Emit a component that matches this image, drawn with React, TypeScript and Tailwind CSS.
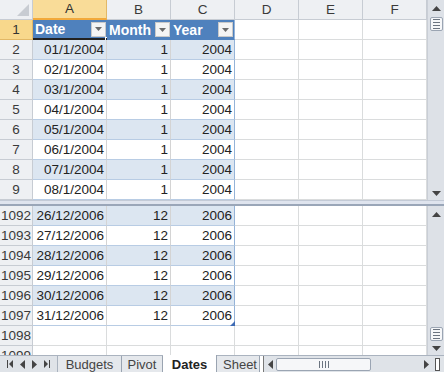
import React from "react";

const COLS = [
  { name: "A", w: 74 },
  { name: "B", w: 64 },
  { name: "C", w: 64 },
  { name: "D", w: 64 },
  { name: "E", w: 64 },
  { name: "F", w: 64 },
];

type RowData = { n: number; a?: string; b?: string; c?: string; band?: "blue" | "white"; last?: boolean };

const top: RowData[] = [];
for (let i = 2; i <= 9; i++) {
  top.push({ n: i, a: `0${i - 1}/1/2004`, b: "1", c: "2004", band: i % 2 === 0 ? "blue" : "white" });
}
const bottom: RowData[] = [];
for (let i = 1092; i <= 1097; i++) {
  bottom.push({ n: i, a: `${i - 1066}/12/2006`, b: "12", c: "2006", band: i % 2 === 0 ? "blue" : "white", last: i === 1097 });
}
bottom.push({ n: 1098 });
bottom.push({ n: 1099 });

function RowHeader({ n, selected }: { n: number | string; selected?: boolean }) {
  return (
    <div
      className={`w-[33px] h-[20px] shrink-0 flex items-center justify-center border-r border-b ${
        selected ? "bg-[#f8d88c] border-[#e2b866] text-[#333]" : "bg-[#eef0f3] border-[#c7ccd3] text-[#3a3a3a]"
      }`}
    >
      {n}
    </div>
  );
}

function Dropdown() {
  return (
    <div className="w-[15px] h-[15px] bg-[#f4f4f4] border border-[#c9c9c9] flex items-center justify-center shrink-0">
      <svg width="7" height="4" viewBox="0 0 7 4">
        <path d="M0 0 L7 0 L3.5 4 Z" fill="#6b6b6b" />
      </svg>
    </div>
  );
}

function DataRow({ r }: { r: RowData }) {
  const has = r.a !== undefined;
  const bg = r.band === "blue" ? "bg-[#dce6f1]" : "bg-white";
  return (
    <div className="flex h-[20px]">
      <RowHeader n={r.n} />
      {COLS.map((c, i) => {
        const inTable = has && i < 3;
        const val = i === 0 ? r.a : i === 1 ? r.b : i === 2 ? r.c : "";
        let cls = "h-[20px] shrink-0 border-b border-r flex items-center px-[2px] ";
        if (inTable) {
          cls += `${bg} border-b-[#b8cce4] ${i === 2 ? "border-r-[#95b3d7]" : "border-r-[#d4d4d4]"} justify-end `;
        } else {
          cls += "bg-white border-[#dadcdd] ";
        }
        return (
          <div key={c.name} className={cls + "relative"} style={{ width: c.w }}>
            {inTable ? val : ""}
            {inTable && i === 2 && r.last && (
              <div className="absolute right-[-1px] bottom-[-1px] w-0 h-0 border-l-[5px] border-l-transparent border-b-[5px] border-b-[#3e6bb4]" />
            )}
          </div>
        );
      })}
    </div>
  );
}

function HeaderTableRow() {
  const labels = ["Date", "Month", "Year"];
  return (
    <div className="flex h-[20px]">
      <RowHeader n={1} selected />
      {COLS.map((c, i) => {
        if (i < 3) {
          return (
            <div
              key={c.name}
              className={`h-[20px] shrink-0 bg-[#4f81bd] text-white font-bold flex items-center justify-between pl-[2px] pr-[1px] relative text-[14px] ${
                i === 0 ? "border-b-2 border-b-[#222]" : "border-b border-b-[#4f81bd]"
              } ${i === 2 ? "border-r border-r-[#95b3d7]" : ""}`}
              style={{ width: c.w }}
            >
              <span>{labels[i]}</span>
              <Dropdown />
              {i === 0 && <div className="absolute right-[-3px] bottom-[-4px] w-[5px] h-[5px] bg-[#222] border border-white" />}
            </div>
          );
        }
        return (
          <div key={c.name} className="h-[20px] shrink-0 bg-white border-b border-r border-[#dadcdd]" style={{ width: c.w }} />
        );
      })}
    </div>
  );
}

function ColHeaderRow() {
  return (
    <div className="flex h-[20px]">
      <div className="w-[33px] h-[20px] shrink-0 bg-[#eef0f3] border-r border-b border-[#c7ccd3] relative">
        <div className="absolute right-[3px] bottom-[3px] w-0 h-0 border-l-[12px] border-l-transparent border-b-[12px] border-b-[#c8ccd2]" />
      </div>
      {COLS.map((c, i) => (
        <div
          key={c.name}
          className={`h-[20px] shrink-0 flex items-center justify-center border-r ${
            i === 0
              ? "bg-[#f9dc98] border-r-[#e2b866] border-b-2 border-b-[#f2a93b] text-[#333]"
              : "bg-[#eef0f3] border-r-[#c7ccd3] border-b border-b-[#c7ccd3] text-[#3a3a3a]"
          }`}
          style={{ width: c.w }}
        >
          {c.name}
        </div>
      ))}
    </div>
  );
}

function Arrow({ dir }: { dir: "up" | "down" | "left" | "right" }) {
  const d =
    dir === "up" ? "M0 5 L9 5 L4.5 0 Z" : dir === "down" ? "M0 0 L9 0 L4.5 5 Z" : dir === "left" ? "M5 0 L5 9 L0 4.5 Z" : "M0 0 L0 9 L5 4.5 Z";
  const w = dir === "up" || dir === "down" ? 9 : 5;
  const h = dir === "up" || dir === "down" ? 5 : 9;
  return (
    <svg width={w} height={h} viewBox={`0 0 ${w} ${h}`}>
      <path d={d} fill="#444" />
    </svg>
  );
}

function Thumb() {
  return (
    <div className="w-[13px] h-[14px] bg-[#f6f7f9] border border-[#9ba5b3] rounded-[2px] flex flex-col items-center justify-center gap-[2px]">
      <div className="w-[7px] h-px bg-[#6b7480]" />
      <div className="w-[7px] h-px bg-[#6b7480]" />
      <div className="w-[7px] h-px bg-[#6b7480]" />
      <div className="w-[7px] h-px bg-[#6b7480]" />
    </div>
  );
}

function VScroll({ thumbTop, height }: { thumbTop: boolean; height: number }) {
  return (
    <div className="w-[17px] shrink-0 bg-[#dde1e7] border-l border-[#c9ced6] flex flex-col items-center" style={{ height }}>
      <div className="h-[17px] flex items-center justify-center">
        <Arrow dir="up" />
      </div>
      {thumbTop ? (
        <>
          <Thumb />
          <div className="flex-1" />
        </>
      ) : (
        <>
          <div className="flex-1" />
          <Thumb />
        </>
      )}
      <div className="h-[14px] flex items-center justify-center">
        <Arrow dir="down" />
      </div>
    </div>
  );
}

function Tab({ label, active, w }: { label: string; active?: boolean; w: number }) {
  return (
    <div
      className={`h-[17px] shrink-0 flex items-center justify-center border-r border-[#9aa4b1] ${
        active ? "bg-white font-bold text-[#222] -mt-px h-[18px]" : "bg-[#e5e8ec] text-[#444]"
      }`}
      style={{ width: w }}
    >
      {label}
    </div>
  );
}

export default function App() {
  return (
    <div
      className="w-[444px] h-[372px] overflow-hidden bg-white flex flex-col text-[13.5px] leading-none text-[#222]"
      style={{ fontFamily: '"Liberation Sans", Arial, sans-serif' }}
    >
      <div className="flex h-[200px] shrink-0">
        <div className="w-[427px] overflow-hidden">
          <ColHeaderRow />
          <HeaderTableRow />
          {top.map((r) => (
            <DataRow key={r.n} r={r} />
          ))}
        </div>
        <VScroll thumbTop height={200} />
      </div>
      <div className="h-[6px] shrink-0 bg-[#dfe4ee] border-t border-[#c3cad6] border-b-2 border-b-[#9aa6b8]" />
      <div className="flex h-[149px] shrink-0">
        <div className="w-[427px] overflow-hidden">
          {bottom.map((r) => (
            <DataRow key={r.n} r={r} />
          ))}
        </div>
        <VScroll thumbTop={false} height={149} />
      </div>
      <div className="h-[17px] shrink-0 bg-[#dfe3e8] border-t border-[#aab3bf] flex items-stretch text-[13px]">
        <div className="w-[58px] shrink-0 flex items-center justify-around px-[4px] border-r border-[#aab3bf]">
          <svg width="6" height="8" viewBox="0 0 6 8"><path d="M0 0 H1 V8 H0 Z M6 0 V8 L2 4 Z" fill="#444" /></svg>
          <Arrow dir="left" />
          <Arrow dir="right" />
          <svg width="6" height="8" viewBox="0 0 6 8"><path d="M0 0 V8 L4 4 Z M5 0 H6 V8 H5 Z" fill="#444" /></svg>
        </div>
        <Tab label="Budgets" w={64} />
        <Tab label="Pivot" w={41} />
        <Tab label="Dates" active w={54} />
        <div className="w-[43px] shrink-0 flex items-center pl-[6px] bg-[#e5e8ec] text-[#444] overflow-hidden whitespace-nowrap border-r border-[#9aa4b1]">
          Sheet
        </div>
        <div className="w-[4px] shrink-0 border-r border-[#777] bg-white" />
        <div className="flex-1 flex items-center px-[4px] gap-[3px]">
          <Arrow dir="left" />
          <div className="w-[95px] h-[13px] bg-[#f6f7f9] border border-[#9ba5b3] rounded-[2px] flex items-center justify-center gap-[2px]">
            <div className="w-px h-[7px] bg-[#6b7480]" />
            <div className="w-px h-[7px] bg-[#6b7480]" />
            <div className="w-px h-[7px] bg-[#6b7480]" />
            <div className="w-px h-[7px] bg-[#6b7480]" />
          </div>
          <div className="flex-1" />
          <Arrow dir="right" />
          <div className="w-[5px] h-[13px] ml-[3px] bg-white border border-[#555]" />
        </div>
      </div>
    </div>
  );
}
